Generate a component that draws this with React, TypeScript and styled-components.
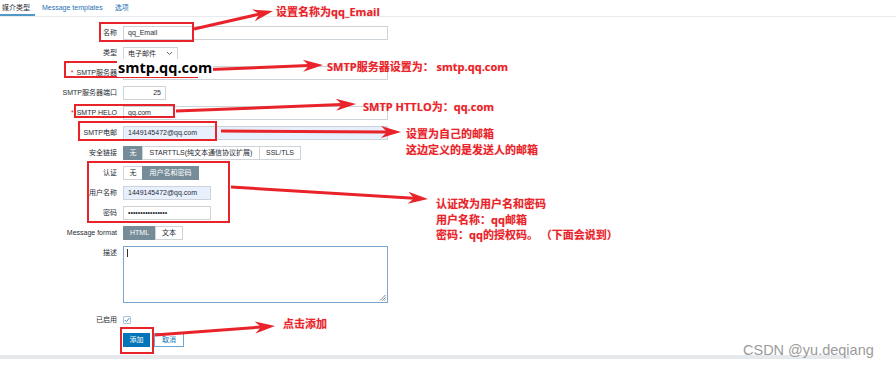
import React from "react";
import styled, { createGlobalStyle } from "styled-components";

const GlobalStyle = createGlobalStyle`
  html, body { margin: 0; padding: 0; background: #fff; }
  body { font-family: "Liberation Sans", "Noto Sans CJK SC", sans-serif; }
`;

const FONT = `"Liberation Sans", "Noto Sans CJK SC", sans-serif`;
const RED = "#e8232a";

const Page = styled.div`
  position: relative;
  width: 896px;
  height: 370px;
  overflow: hidden;
  background: #fff;
  font-family: ${FONT};
  color: #1f2c33;
`;

const TabBar = styled.div`
  display: flex;
  gap: 5px;
  height: 16px;
  border-bottom: 1px solid #e8ebed;
`;

const Tab = styled.div<{ $active?: boolean }>`
  box-sizing: border-box;
  height: 16px;
  padding: 0 5px 0 2px;
  line-height: 15px;
  font-size: 7px;
  white-space: nowrap;
  color: ${(p) => (p.$active ? "#1f2c33" : "#1f6fb5")};
  border-bottom: 2px solid ${(p) => (p.$active ? "#4f98c9" : "transparent")};
`;

const Form = styled.div`
  display: flex;
  flex-direction: column;
  gap: 6px;
  padding-top: 9px;
`;

const Row = styled.div<{ $top?: boolean; $mt?: number }>`
  display: grid;
  grid-template-columns: 117px 1fr;
  column-gap: 6px;
  align-items: ${(p) => (p.$top ? "start" : "center")};
  min-height: 14px;
  margin-top: ${(p) => p.$mt ?? 0}px;
`;

const Label = styled.div`
  text-align: right;
  font-size: 7px;
  line-height: 14px;
  white-space: nowrap;
`;

const Star = styled.span`
  color: ${RED};
  margin-right: 3px;
`;

const Control = styled.div`
  justify-self: start;
  display: flex;
  align-items: center;
  gap: 4px;
`;

const Field = styled.div<{ $w: number; $filled?: boolean; $right?: boolean }>`
  box-sizing: border-box;
  width: ${(p) => p.$w}px;
  height: 14px;
  padding: 0 4px;
  border: 1px solid #cdd4d9;
  background: ${(p) => (p.$filled ? "#e8f0fe" : "#fff")};
  font-size: 7px;
  line-height: 12px;
  white-space: nowrap;
  overflow: hidden;
  color: #1f2c33;
  text-align: ${(p) => (p.$right ? "right" : "left")};
`;

const SelectBox = styled.div`
  box-sizing: border-box;
  width: 55px;
  height: 13px;
  border: 1px solid #cdd4d9;
  display: flex;
  align-items: center;
  justify-content: space-between;
  padding: 0 4px;
  font-size: 7px;
`;

const Segmented = styled.div`
  display: inline-flex;
  height: 14px;
`;

const Seg = styled.div<{ $on?: boolean; $w: number }>`
  box-sizing: border-box;
  width: ${(p) => p.$w}px;
  height: 14px;
  border: 1px solid ${(p) => (p.$on ? "#768d99" : "#cdd4d9")};
  & + & { margin-left: -1px; }
  background: ${(p) => (p.$on ? "#768d99" : "#fff")};
  color: ${(p) => (p.$on ? "#fff" : "#1f2c33")};
  font-size: 7px;
  line-height: 12px;
  text-align: center;
  white-space: nowrap;
`;

const TextAreaBox = styled.div`
  position: relative;
  box-sizing: border-box;
  width: 265px;
  height: 57px;
  border: 1px solid #7ba7cf;
  padding: 2px 3px;
`;

const Caret = styled.div`
  width: 1px;
  height: 8px;
  background: #333;
`;

const Grip = styled.svg`
  position: absolute;
  right: 1px;
  bottom: 1px;
`;

const CheckBox = styled.div`
  box-sizing: border-box;
  width: 8px;
  height: 8px;
  border: 1px solid #a7c3db;
  border-radius: 1px;
  display: flex;
  align-items: center;
  justify-content: center;
`;

const Button = styled.div<{ $primary?: boolean; $w: number }>`
  box-sizing: border-box;
  width: ${(p) => p.$w}px;
  height: 14px;
  border: 1px solid ${(p) => (p.$primary ? "#0275b8" : "#6aa7d6")};
  background: ${(p) => (p.$primary ? "#0275b8" : "#fff")};
  color: ${(p) => (p.$primary ? "#fff" : "#0275b8")};
  font-size: 7px;
  line-height: 12px;
  text-align: center;
`;

const Divider = styled.div`
  width: 850px;
  height: 4px;
  margin-top: 8px;
  background: #e6e9ec;
`;

const Watermark = styled.div`
  position: absolute;
  left: 743px;
  top: 342px;
  font-family: "Liberation Sans", sans-serif;
  font-size: 14.5px;
  line-height: 16px;
  color: #9b9b9b;
  white-space: nowrap;
`;

const RedBox = styled.div<{ $x: number; $y: number; $w: number; $h: number }>`
  position: absolute;
  box-sizing: border-box;
  left: ${(p) => p.$x}px;
  top: ${(p) => p.$y}px;
  width: ${(p) => p.$w}px;
  height: ${(p) => p.$h}px;
  border: 2px solid ${RED};
`;

const Note = styled.div<{ $x: number; $y: number }>`
  position: absolute;
  left: ${(p) => p.$x}px;
  top: ${(p) => p.$y}px;
  font-family: "Open Sans", "Noto Sans CJK SC", sans-serif;
  font-weight: 700;
  font-size: 11px;
  line-height: 15.5px;
  color: ${RED};
  white-space: nowrap;
  text-shadow: 0 0 1px rgba(232, 35, 42, 0.35);
`;

const BigText = styled.div`
  position: absolute;
  left: 117px;
  top: 59px;
  padding: 0 1px;
  background: #fff;
  font-family: "Open Sans", sans-serif;
  font-weight: 700;
  font-size: 14.5px;
  line-height: 18px;
  color: #000;
`;

const ArrowLayer = styled.svg`
  position: absolute;
  left: 0;
  top: 0;
  pointer-events: none;
`;

type Arrow = { x1: number; y1: number; x2: number; y2: number };
const arrows: Arrow[] = [
  { x1: 194, y1: 29, x2: 273, y2: 11 },
  { x1: 198, y1: 70, x2: 323, y2: 65 },
  { x1: 176, y1: 111, x2: 356, y2: 104 },
  { x1: 221, y1: 131, x2: 401, y2: 132 },
  { x1: 231, y1: 187, x2: 428, y2: 199 },
  { x1: 155, y1: 335, x2: 275, y2: 326 },
];

function arrowGeom(a: Arrow, len = 20, w = 6) {
  const ang = Math.atan2(a.y2 - a.y1, a.x2 - a.x1);
  const dx = Math.cos(ang);
  const dy = Math.sin(ang);
  const bx = a.x2 - len * dx;
  const by = a.y2 - len * dy;
  const nx = a.x2 - len * 0.7 * dx;
  const ny = a.y2 - len * 0.7 * dy;
  const px = -dy * w;
  const py = dx * w;
  const pts = `${a.x2},${a.y2} ${bx + px},${by + py} ${nx},${ny} ${bx - px},${by - py}`;
  return { pts, nx, ny };
}

const boxes = [
  { x: 99, y: 22, w: 95, h: 20 },
  { x: 64, y: 61, w: 134, h: 17 },
  { x: 74, y: 104, w: 101, h: 14 },
  { x: 78, y: 121, w: 139, h: 20 },
  { x: 87, y: 161, w: 143, h: 62 },
  { x: 120, y: 327, w: 34, h: 27 },
];

export default function App() {
  return (
    <Page>
      <GlobalStyle />
      <TabBar>
        <Tab $active>媒介类型</Tab>
        <Tab>Message templates</Tab>
        <Tab>选项</Tab>
      </TabBar>

      <Form>
        <Row>
          <Label>名称</Label>
          <Control>
            <Field $w={265}>qq_Email</Field>
          </Control>
        </Row>
        <Row>
          <Label>类型</Label>
          <Control>
            <SelectBox>
              <span>电子邮件</span>
              <svg width="7" height="5" viewBox="0 0 7 5">
                <path d="M1 1 L3.5 3.5 L6 1" fill="none" stroke="#555" strokeWidth="0.9" />
              </svg>
            </SelectBox>
          </Control>
        </Row>
        <Row>
          <Label>
            <Star>*</Star>SMTP服务器
          </Label>
          <Control>
            <Field $w={265} />
          </Control>
        </Row>
        <Row>
          <Label>SMTP服务器端口</Label>
          <Control>
            <Field $w={43} $right>25</Field>
          </Control>
        </Row>
        <Row>
          <Label>
            <Star>*</Star>SMTP HELO
          </Label>
          <Control>
            <Field $w={265}>qq.com</Field>
          </Control>
        </Row>
        <Row>
          <Label>
            <Star>*</Star>SMTP电邮
          </Label>
          <Control>
            <Field $w={265} $filled>1449145472@qq.com</Field>
          </Control>
        </Row>
        <Row>
          <Label>安全链接</Label>
          <Control>
            <Segmented>
              <Seg $on $w={20}>无</Seg>
              <Seg $w={118}>STARTTLS(纯文本通信协议扩展)</Seg>
              <Seg $w={42}>SSL/TLS</Seg>
            </Segmented>
          </Control>
        </Row>
        <Row>
          <Label>认证</Label>
          <Control>
            <Segmented>
              <Seg $w={20}>无</Seg>
              <Seg $on $w={57}>用户名和密码</Seg>
            </Segmented>
          </Control>
        </Row>
        <Row>
          <Label>用户名称</Label>
          <Control>
            <Field $w={88} $filled>1449145472@qq.com</Field>
          </Control>
        </Row>
        <Row>
          <Label>密码</Label>
          <Control>
            <Field $w={88}>••••••••••••••••</Field>
          </Control>
        </Row>
        <Row>
          <Label>Message format</Label>
          <Control>
            <Segmented>
              <Seg $on $w={33}>HTML</Seg>
              <Seg $w={28}>文本</Seg>
            </Segmented>
          </Control>
        </Row>
        <Row $top>
          <Label>描述</Label>
          <Control>
            <TextAreaBox>
              <Caret />
              <Grip width="7" height="7" viewBox="0 0 7 7">
                <path d="M6.5 1 L1 6.5 M6.5 3.5 L3.5 6.5 M6.5 5.5 L5.5 6.5" stroke="#666" strokeWidth="0.8" />
              </Grip>
            </TextAreaBox>
          </Control>
        </Row>
        <Row $mt={4}>
          <Label>已启用</Label>
          <Control>
            <CheckBox>
              <svg width="6" height="6" viewBox="0 0 6 6">
                <path d="M0.8 3 L2.4 4.6 L5.3 1.2" fill="none" stroke="#2f7fc0" strokeWidth="0.9" />
              </svg>
            </CheckBox>
          </Control>
        </Row>
        <Row>
          <span />
          <Control>
            <Button $primary $w={27}>添加</Button>
            <Button $w={30}>取消</Button>
          </Control>
        </Row>
      </Form>
      <Divider />

      <Watermark>CSDN @yu.deqiang</Watermark>

      {boxes.map((b, i) => (
        <RedBox key={i} $x={b.x} $y={b.y} $w={b.w} $h={b.h} />
      ))}

      <ArrowLayer width="896" height="370" viewBox="0 0 896 370">
        {arrows.map((a, i) => {
          const g = arrowGeom(a);
          return (
            <g key={i}>
              <line x1={a.x1} y1={a.y1} x2={g.nx} y2={g.ny} stroke={RED} strokeWidth="3" />
              <polygon points={g.pts} fill={RED} />
            </g>
          );
        })}
      </ArrowLayer>

      <BigText>smtp.qq.com</BigText>

      <Note $x={276} $y={4}>设置名称为qq_Email</Note>
      <Note $x={327} $y={59}>SMTP服务器设置为： smtp.qq.com</Note>
      <Note $x={363} $y={99}>SMTP HTTLO为：qq.com</Note>
      <Note $x={406} $y={126}>
        设置为自己的邮箱
        <br />
        这边定义的是发送人的邮箱
      </Note>
      <Note $x={436} $y={196}>
        认证改为用户名和密码
        <br />
        用户名称：qq邮箱
        <br />
        密码：qq的授权码。 （下面会说到）
      </Note>
      <Note $x={283} $y={316}>点击添加</Note>
    </Page>
  );
}
